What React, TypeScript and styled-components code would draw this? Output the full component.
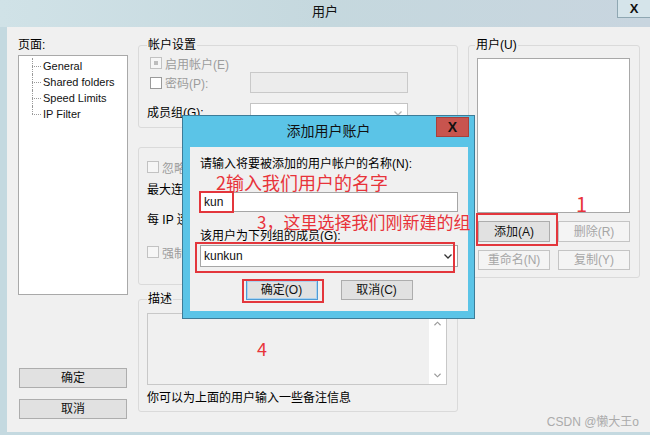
import styled, { createGlobalStyle } from "styled-components";

const Global = createGlobalStyle`
  html, body { margin: 0; padding: 0; background: #f0f0f0; }
  body {
    font-family: "Liberation Sans", "Noto Sans CJK SC", sans-serif;
    font-size: 12px;
    color: #000;
  }
  * { box-sizing: border-box; }
`;

const Window = styled.div`
  position: relative;
  width: 650px;
  height: 435px;
  display: flex;
  flex-direction: column;
  background: #c4d9e0;
  overflow: hidden;
`;

const TitleBar = styled.div`
  height: 27px;
  display: grid;
  grid-template-columns: 33px 1fr 33px;
  align-items: start;
  background: linear-gradient(90deg, #d0e2e7 0%, #c5d8de 50%, #c8d5df 100%);
`;

const Title = styled.div<{ $lh: number; $size: number }>`
  grid-column: 2;
  text-align: center;
  font-size: ${p => p.$size}px;
  line-height: ${p => p.$lh}px;
  color: #111;
`;

const CloseButton = styled.div<{ $red?: boolean }>`
  grid-column: 3;
  height: ${p => (p.$red ? 20 : 18)}px;
  display: flex;
  align-items: center;
  justify-content: center;
  background: ${p => (p.$red ? "#c8544e" : "#d5e4ea")};
  border: 1px solid ${p => (p.$red ? "#a8403b" : "#8fa7b2")};
  border-top: ${p => (p.$red ? "1px solid #a8403b" : "none")};
  border-right: ${p => (p.$red ? "1px solid #a8403b" : "none")};
  font: bold ${p => (p.$red ? 14 : 13)}px "Liberation Sans", sans-serif;
  color: #111;
`;

const Body = styled.div`
  flex: 1;
  margin: 0 0 3px 7px;
  background: #f0f0f0;
  display: grid;
  grid-template-columns: 110px 320px 172px;
  column-gap: 10px;
  padding: 11px 0 13px 11px;
  min-height: 0;
`;

const Column = styled.div`
  display: flex;
  flex-direction: column;
  min-height: 0;
`;

const Label = styled.div<{ $muted?: boolean }>`
  line-height: 14px;
  white-space: nowrap;
  color: ${p => (p.$muted ? "#9c9c9c" : "#000")};
`;

const Tree = styled.div`
  margin-top: 3px;
  height: 240px;
  background: #fff;
  border: 1px solid #a9a9a9;
  padding-top: 2px;
`;

const TreeItem = styled.div<{ $last?: boolean }>`
  position: relative;
  height: 16px;
  line-height: 16px;
  padding-left: 24px;
  font-size: 11px;
  color: #111;
  &::before {
    content: "";
    position: absolute;
    left: 13px;
    top: 0;
    height: ${p => (p.$last ? 8 : 16)}px;
    border-left: 1px dotted #9a9a9a;
  }
  &::after {
    content: "";
    position: absolute;
    left: 13px;
    top: 8px;
    width: 9px;
    border-top: 1px dotted #9a9a9a;
  }
`;

const ButtonStack = styled.div`
  margin-top: auto;
  display: flex;
  flex-direction: column;
  gap: 11px;
  padding: 0 1px;
`;

const Button = styled.button<{ $off?: boolean; $primary?: boolean; $h?: number }>`
  height: ${p => p.$h ?? 20}px;
  padding: 0;
  font-family: "Liberation Sans", "Noto Sans CJK SC", sans-serif;
  font-size: 12px;
  line-height: 16px;
  background: ${p => (p.$off ? "#f4f4f4" : "#e1e1e1")};
  border: 1px solid ${p => (p.$off ? "#c4c4c4" : p.$primary ? "#4f9bd4" : "#adadad")};
  box-shadow: ${p => (p.$primary ? "inset 0 0 0 1px #a9d2f0" : "none")};
  color: ${p => (p.$off ? "#a6a6a6" : "#111")};
`;

const Group = styled.fieldset<{ $pad: string; $gap?: number }>`
  margin: ${p => p.$gap ?? 0}px 0 0 0;
  border: 1px solid #dadada;
  border-radius: 3px;
  padding: ${p => p.$pad};
  min-width: 0;
  display: flex;
  flex-direction: column;
`;

const Legend = styled.legend<{ $shift?: number }>`
  padding: 0 1px;
  margin-left: ${p => p.$shift ?? 0}px;
  font-size: 12px;
  line-height: 14px;
`;

const CheckRow = styled.div<{ $indent?: number; $gap?: number; $muted?: boolean }>`
  height: 16px;
  margin-top: ${p => p.$gap ?? 0}px;
  padding-left: ${p => p.$indent ?? 0}px;
  display: flex;
  align-items: center;
  gap: 3px;
  white-space: nowrap;
  color: ${p => (p.$muted ? "#9c9c9c" : "#000")};
`;

const Check = styled.span<{ $checked?: boolean; $dim?: boolean }>`
  width: 12px;
  height: 12px;
  flex: none;
  border: 1px solid ${p => (p.$dim ? "#c2c2c2" : "#9a9a9a")};
  background: ${p => (p.$dim ? "#f6f6f6" : "#fff")};
  display: flex;
  align-items: center;
  justify-content: center;
  &::after {
    content: "";
    width: 4px;
    height: 4px;
    background: #bdbdbd;
    display: ${p => (p.$checked ? "block" : "none")};
  }
`;

const FormRow = styled.div<{ $gap: number; $h: number }>`
  display: grid;
  grid-template-columns: 103px 158px;
  align-items: center;
  height: ${p => p.$h}px;
  margin-top: ${p => p.$gap}px;
`;

const Field = styled.div<{ $off?: boolean; $h: number; $border?: string }>`
  height: ${p => p.$h}px;
  background: ${p => (p.$off ? "#ececec" : "#fff")};
  border: 1px solid ${p => p.$border ?? (p.$off ? "#c9c9c9" : "#bdbdbd")};
  display: flex;
  align-items: center;
  justify-content: space-between;
  padding: 0 5px 0 3px;
  font-size: 12px;
  color: #111;
`;

const TextLine = styled.div<{ $gap: number; $muted?: boolean }>`
  margin-top: ${p => p.$gap}px;
  line-height: 14px;
  white-space: nowrap;
  color: ${p => (p.$muted ? "#9c9c9c" : "#000")};
`;

const Memo = styled.div`
  height: 72px;
  margin-right: 2px;
  border: 1px solid #c8c8c8;
  background: #f0f0f0;
  display: flex;
  justify-content: flex-end;
`;

const ScrollBar = styled.div`
  width: 17px;
  background: #fff;
  display: flex;
  flex-direction: column;
  justify-content: space-between;
  align-items: center;
  padding: 7px 0 6px;
`;

const UserList = styled.div`
  height: 155px;
  background: #fff;
  border: 1px solid #a8a8a8;
`;

const ButtonGrid = styled.div`
  margin-top: 8px;
  padding-left: 1px;
  display: grid;
  grid-template-columns: 72px 72px;
  grid-template-rows: 21px 20px;
  column-gap: 8px;
  row-gap: 8px;
`;

const Dialog = styled.div`
  position: absolute;
  left: 182px;
  top: 115px;
  width: 293px;
  height: 204px;
  border: 1px solid #3d7c98;
  background: #5bc4e7;
  display: flex;
  flex-direction: column;
`;

const DialogTitleBar = styled.div`
  height: 31px;
  padding: 1px 5px 0;
  display: grid;
  grid-template-columns: 33px 1fr 33px;
  align-items: start;
`;

const DialogClient = styled.div`
  flex: 1;
  margin: 0 6px 7px 7px;
  background: #f0f0f0;
  padding: 10px 10px 0 10px;
  display: flex;
  flex-direction: column;
`;

const DialogField = styled(Field)<{ $gap: number }>`
  margin-top: ${p => p.$gap}px;
  flex: none;
`;

const DialogButtons = styled.div`
  margin-top: 13px;
  display: flex;
  justify-content: center;
  gap: 23px;
  & > button { width: 72px; }
`;

const Mark = styled.div<{ $x: number; $y: number; $w: number; $h: number }>`
  position: absolute;
  left: ${p => p.$x}px;
  top: ${p => p.$y}px;
  width: ${p => p.$w}px;
  height: ${p => p.$h}px;
  border: 2px solid #e3363c;
  pointer-events: none;
`;

const Note = styled.div<{ $x: number; $y: number; $size: number }>`
  position: absolute;
  left: ${p => p.$x}px;
  top: ${p => p.$y}px;
  font-family: "Noto Sans CJK SC", sans-serif;
  font-size: ${p => p.$size}px;
  line-height: 16px;
  color: #e8333a;
  white-space: nowrap;
`;

const Watermark = styled.div`
  position: absolute;
  right: 11px;
  bottom: 6px;
  font-size: 12px;
  line-height: 14px;
  color: #ababab;
`;

function Chevron({ up, color, w = 8 }: { up?: boolean; color: string; w?: number }) {
  return (
    <svg width={w} height={5} viewBox="0 0 8 5">
      <polyline
        points={up ? "0.5,4.5 4,1 7.5,4.5" : "0.5,0.5 4,4 7.5,0.5"}
        fill="none"
        stroke={color}
        strokeWidth={1.3}
      />
    </svg>
  );
}

export default function App() {
  return (
    <>
      <Global />
      <Window>
        <TitleBar>
          <Title $lh={24} $size={13}>用户</Title>
          <CloseButton>X</CloseButton>
        </TitleBar>

        <Body>
          <Column>
            <Label>页面:</Label>
            <Tree>
              <TreeItem>General</TreeItem>
              <TreeItem>Shared folders</TreeItem>
              <TreeItem>Speed Limits</TreeItem>
              <TreeItem $last>IP Filter</TreeItem>
            </Tree>
            <ButtonStack>
              <Button>确定</Button>
              <Button>取消</Button>
            </ButtonStack>
          </Column>

          <Column>
            <Group $pad="3px 8px 4px 8px">
              <Legend>帐户设置</Legend>
              <CheckRow $indent={3} $muted>
                <Check $checked $dim />
                启用帐户(E)
              </CheckRow>
              <FormRow $gap={1} $h={21}>
                <CheckRow $indent={3} $muted>
                  <Check />
                  密码(P):
                </CheckRow>
                <Field $off $h={21} />
              </FormRow>
              <FormRow $gap={10} $h={20}>
                <Label>成员组(G):</Label>
                <Field $h={20} $border="#c4c4c4">
                  <span />
                  <Chevron color="#b5b5b5" />
                </Field>
              </FormRow>
            </Group>

            <Group $pad="11px 8px 24px 8px" $gap={19}>
              <CheckRow $muted>
                <Check $dim />
                忽略服务器的用户数限制
              </CheckRow>
              <TextLine $gap={8}>最大连接数:</TextLine>
              <TextLine $gap={16}>每 IP 连接数限制:</TextLine>
              <CheckRow $gap={17} $muted>
                <Check $dim />
                强制 SSL 用户登录
              </CheckRow>
            </Group>

            <Group $pad="7px 8px 6px 8px" $gap={7}>
              <Legend>描述</Legend>
              <Memo>
                <ScrollBar>
                  <Chevron up color="#9a9a9a" w={7} />
                  <Chevron color="#9a9a9a" w={7} />
                </ScrollBar>
              </Memo>
              <TextLine $gap={6}>你可以为上面的用户输入一些备注信息</TextLine>
            </Group>
          </Column>

          <Column>
            <Group $pad="6px 9px 7px 8px">
              <Legend $shift={-2}>用户(U)</Legend>
              <UserList />
              <ButtonGrid>
                <Button $h={21}>添加(A)</Button>
                <Button $h={21} $off>删除(R)</Button>
                <Button $off>重命名(N)</Button>
                <Button $off>复制(Y)</Button>
              </ButtonGrid>
            </Group>
          </Column>
        </Body>

        <Dialog>
          <DialogTitleBar>
            <Title $lh={28} $size={14}>添加用户账户</Title>
            <CloseButton $red>X</CloseButton>
          </DialogTitleBar>
          <DialogClient>
            <Label>请输入将要被添加的用户帐户的名称(N):</Label>
            <DialogField $gap={21} $h={20} $border="#a6a6a6">kun</DialogField>
            <TextLine $gap={17}>该用户为下列组的成员(G):</TextLine>
            <DialogField $gap={2} $h={22} $border="#a6a6a6">
              kunkun
              <Chevron color="#333" />
            </DialogField>
            <DialogButtons>
              <Button $primary>确定(O)</Button>
              <Button>取消(C)</Button>
            </DialogButtons>
          </DialogClient>
        </Dialog>

        <Note $x={216} $y={174} $size={18}>2输入我们用户的名字</Note>
        <Note $x={257} $y={214} $size={17}>3，这里选择我们刚新建的组</Note>
        <Note $x={576} $y={196} $size={20}>1</Note>
        <Note $x={257} $y={340} $size={18}>4</Note>

        <Mark $x={199} $y={191} $w={35} $h={22} />
        <Mark $x={195} $y={242} $w={260} $h={31} />
        <Mark $x={242} $y={279} $w={82} $h={24} />
        <Mark $x={476} $y={213} $w={82} $h={33} />

        <Watermark>CSDN @懒大王o</Watermark>
      </Window>
    </>
  );
}
